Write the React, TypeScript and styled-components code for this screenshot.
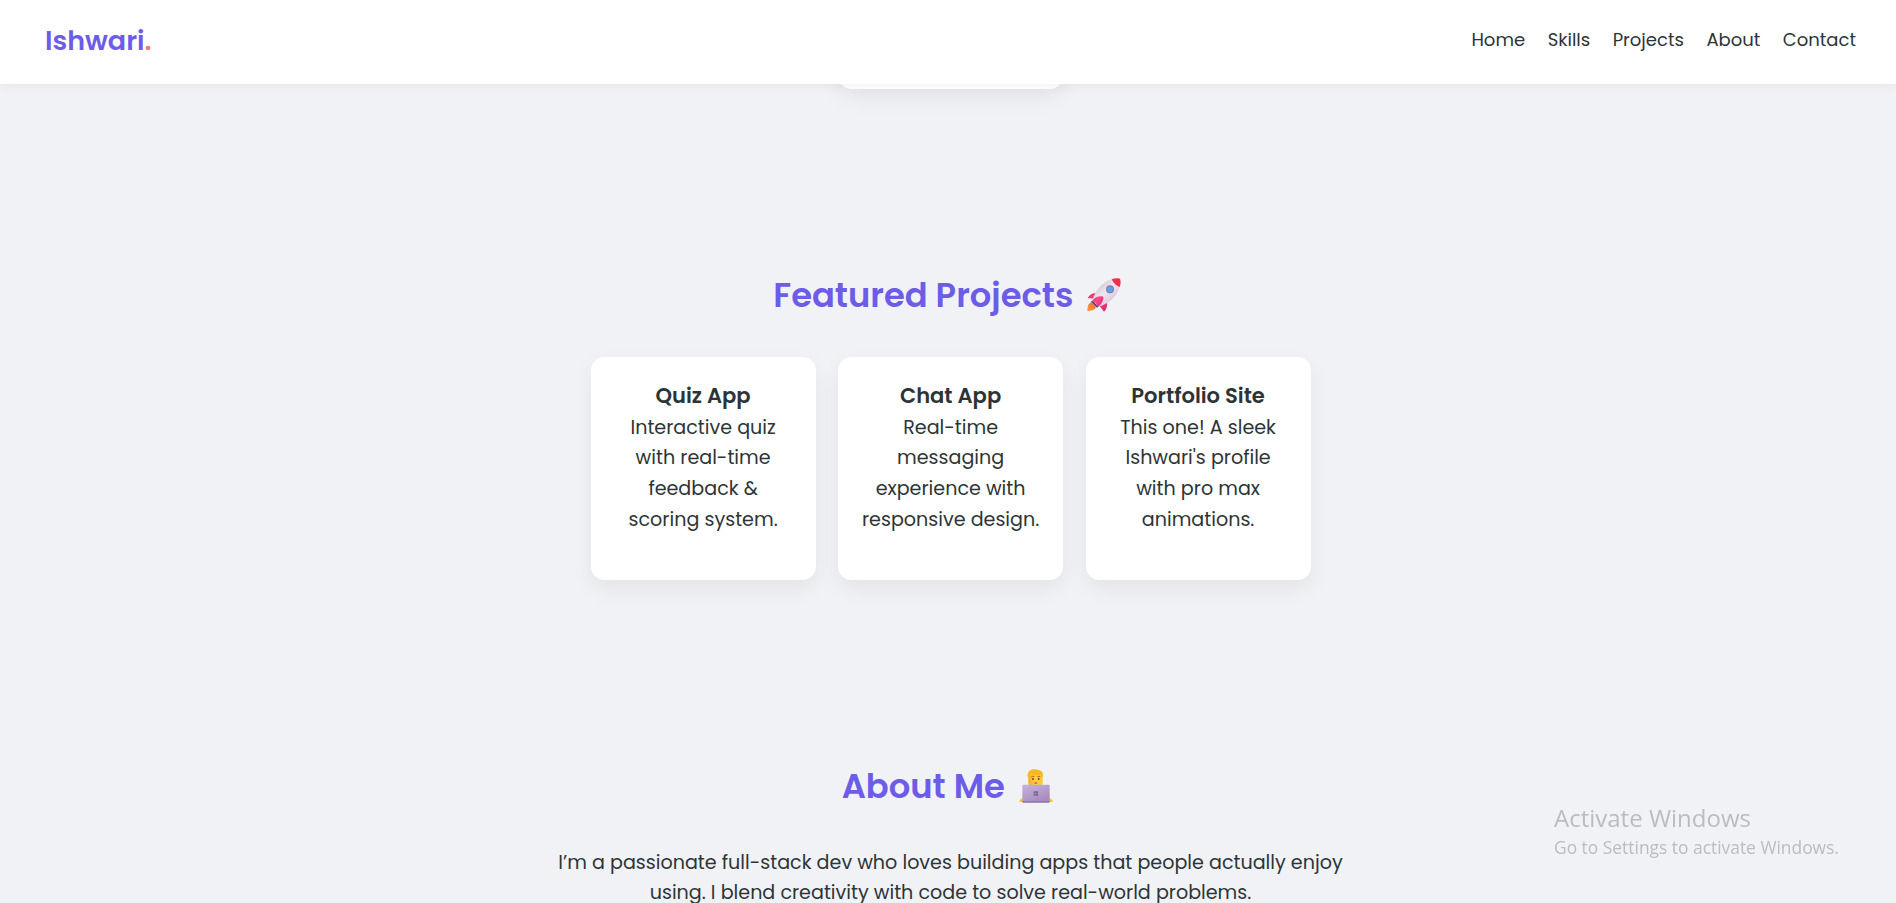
import React from 'react';
import styled, { createGlobalStyle } from 'styled-components';

const GlobalStyle = createGlobalStyle`
  * {
    box-sizing: border-box;
    margin: 0;
    padding: 0;
  }
  body {
    margin: 0;
    background: #f1f2f6;
    color: #2d3436;
    font-family: Poppins, Inter, sans-serif;
    font-size: 19.125px;
    line-height: 30.6px;
  }
`;

const Page = styled.div`
  height: 100vh;
  overflow: hidden;
`;

const Header = styled.header`
  position: relative;
  z-index: 2;
  display: flex;
  justify-content: space-between;
  align-items: center;
  height: 84px;
  padding: 0 40px 3px 45px;
  background: #fff;
  box-shadow: 0 2px 11px rgba(0, 0, 0, 0.05);
`;

const Logo = styled.div`
  font-size: 27px;
  font-weight: 600;
  line-height: 43px;
  color: #6c5ce7;
`;

const LogoDot = styled.span`
  color: #ff7675;
`;

const Nav = styled.nav`
  display: flex;
  justify-content: space-between;
  width: 384.6px;
  margin-bottom: 2px;
  font-size: 18px;
  line-height: 28px;
`;

const NavLink = styled.a`
  color: #2d3436;
  text-decoration: none;
`;

const Main = styled.main`
  margin-top: -36px;
`;

const Section = styled.section<{ $top: number }>`
  display: flex;
  flex-direction: column;
  align-items: center;
  padding-top: ${(p) => p.$top}px;
`;

const Heading = styled.h2<{ $gap: number }>`
  margin-bottom: ${(p) => p.$gap}px;
  font-size: 33.75px;
  font-weight: 600;
  line-height: 54px;
  color: #6c5ce7;
`;

const Emoji = styled.svg`
  width: 34px;
  height: 34px;
  margin: 0 1.4px 0 6px;
  vertical-align: -5px;
`;

const CardRow = styled.div`
  display: flex;
  gap: 22.5px;
  margin-left: 5.2px;
`;

const Card = styled.article<{ $height: number }>`
  width: 225px;
  height: ${(p) => p.$height}px;
  padding: 22.2px 22px 0;
  border-radius: 13.5px;
  background: #fff;
  box-shadow: 0 9px 22.5px rgba(0, 0, 0, 0.06);
  text-align: center;
`;

const CardTitle = styled.h3`
  font-size: 21.06px;
  font-weight: 600;
  line-height: 33.6px;
`;

const Intro = styled.p`
  width: 788px;
  margin-left: 5px;
  text-align: center;
`;

const Watermark = styled.aside`
  position: fixed;
  left: 1554px;
  top: 801px;
  color: #bbbcbe;
  font-family: 'Open Sans', sans-serif;
  white-space: nowrap;
`;

const WatermarkTitle = styled.div`
  font-size: 24px;
  line-height: 33px;
`;

const WatermarkText = styled.div`
  font-size: 17.4px;
  line-height: 26px;
`;

const Rocket = () => (
  <Emoji viewBox="0 0 102 102" role="img" aria-label="rocket">
    <defs>
      <linearGradient id="hull" x1="0.2" y1="0.2" x2="0.75" y2="0.8">
        <stop offset="0" stopColor="#d3c3cf" />
        <stop offset="0.45" stopColor="#f0e6f2" />
        <stop offset="1" stopColor="#d9c6dc" />
      </linearGradient>
      <linearGradient id="fin" x1="0" y1="0" x2="1" y2="0.6">
        <stop offset="0" stopColor="#e0305f" />
        <stop offset="0.5" stopColor="#ff4a8c" />
        <stop offset="1" stopColor="#e32c72" />
      </linearGradient>
      <linearGradient id="flame" x1="1" y1="0" x2="0" y2="1">
        <stop offset="0" stopColor="#e8692b" />
        <stop offset="1" stopColor="#ffa03c" />
      </linearGradient>
    </defs>
    <path d="M13 73C4 76 1 86 1 99c12 0 23-3 26-12z" fill="url(#flame)" />
    <path d="M12 71l18 18 7-5-18-19z" fill="#4b3b78" />
    <path d="M35 46C20 43 8 49 2 60l19 2zM60 71c2 12-1 22-9 30L38 84z" fill="url(#fin)" />
    <path d="M16 68C24 38 46 12 74 4L98 27C90 54 66 78 34 86z" fill="url(#hull)" />
    <path d="M74 4C83 0 92 0 99 2c3 8 2 17-1 25C87 23 79 15 74 4z" fill="#f52f48" />
    <path d="M16 69c5-9 16-15 29-14 4 1 5 3 4 7-3 12-8 19-16 24-4-2-5-5-5-8z" fill="url(#fin)" />
    <circle cx="69" cy="34" r="12" fill="#857c9d" />
    <circle cx="69" cy="34" r="8.5" fill="#58a5f0" />
  </Emoji>
);

const Technologist = () => (
  <Emoji viewBox="0 0 102 102" role="img" aria-label="technologist">
    <defs>
      <linearGradient id="laptop" x1="0" y1="0" x2="0.6" y2="1">
        <stop offset="0" stopColor="#c8b3df" />
        <stop offset="1" stopColor="#a48bbb" />
      </linearGradient>
      <linearGradient id="face" x1="0" y1="0" x2="1" y2="0">
        <stop offset="0" stopColor="#f5ab22" />
        <stop offset="0.5" stopColor="#ffd044" />
        <stop offset="1" stopColor="#ffc52c" />
      </linearGradient>
    </defs>
    <path d="M1 99c0-7 5-11 14-11h72c9 0 14 4 14 11z" fill="#ffc42c" />
    <path d="M28 18h43v22c0 11-8 17-21 17s-22-6-22-17z" fill="url(#face)" />
    <path d="M26 25C24 8 34 1 45 1c5 0 7 1 10 1 12 0 19 9 17 22-4-1-5-4-6-7-13 2-24 0-31 0-2 3-4 7-9 8z" fill="#f7b824" />
    <path d="M37 24q4-4 9-1M55 23q5-3 9 1" stroke="#b96812" strokeWidth="3" fill="none" />
    <circle cx="42" cy="30" r="2.8" fill="#5b3a3d" />
    <circle cx="59" cy="30" r="2.8" fill="#5b3a3d" />
    <path d="M45 42q5-5 11 0-5 4-11 0z" fill="#c23f3a" />
    <rect x="10" y="47" width="82" height="53" rx="3" fill="url(#laptop)" />
    <path d="M10 96h82v2q0 3-3 3H13q-3 0-3-3z" fill="#9279ad" />
    <path d="M44 67h6v6h-6zm7 0h6v6h-6zm-7 7h6v6h-6zm7 0h6v6h-6z" fill="#75628b" />
  </Emoji>
);

const links = ['Home', 'Skills', 'Projects', 'About', 'Contact'];

const projects = [
  { title: 'Quiz App', text: 'Interactive quiz with real-time feedback & scoring system.' },
  { title: 'Chat App', text: 'Real-time messaging experience with responsive design.' },
  { title: 'Portfolio Site', text: "This one! A sleek Ishwari's profile with pro max animations." },
];

const App = () => (
  <Page>
    <GlobalStyle />
    <Header>
      <Logo>
        Ishwari<LogoDot>.</LogoDot>
      </Logo>
      <Nav>
        {links.map((link) => (
          <NavLink key={link}>{link}</NavLink>
        ))}
      </Nav>
    </Header>
    <Main>
      <Section $top={0}>
        <CardRow>
          <Card $height={41} />
        </CardRow>
      </Section>
      <Section $top={180}>
        <Heading $gap={34}>
          Featured Projects <Rocket />
        </Heading>
        <CardRow>
          {projects.map((project) => (
            <Card key={project.title} $height={223}>
              <CardTitle>{project.title}</CardTitle>
              <p>{project.text}</p>
            </Card>
          ))}
        </CardRow>
      </Section>
      <Section $top={180}>
        <Heading $gap={33.6}>
          About Me <Technologist />
        </Heading>
        <Intro>
          I’m a passionate full-stack dev who loves building apps that people actually enjoy using. I blend
          creativity with code to solve real-world problems.
        </Intro>
      </Section>
    </Main>
    <Watermark>
      <WatermarkTitle>Activate Windows</WatermarkTitle>
      <WatermarkText>Go to Settings to activate Windows.</WatermarkText>
    </Watermark>
  </Page>
);

export default App;
